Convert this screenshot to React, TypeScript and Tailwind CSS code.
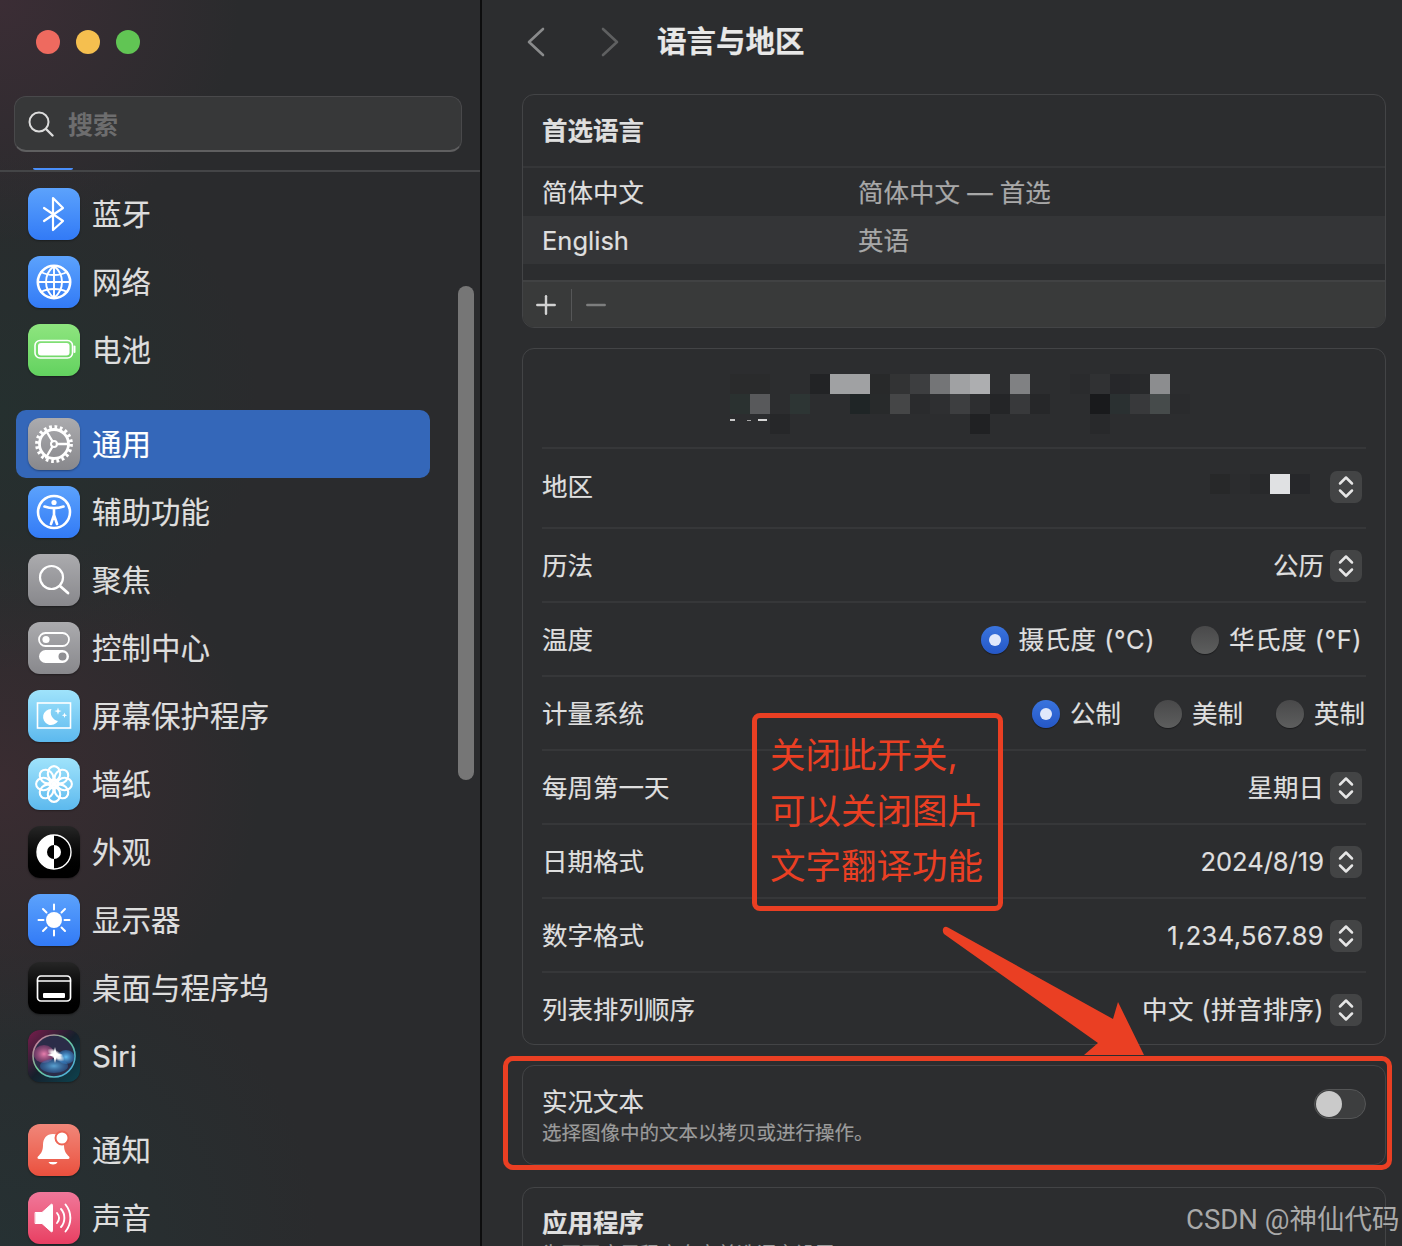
import { Minus, Plus } from "lucide-react";
import type { ReactNode } from "react";

// mosaic blocks over the blurred region text: [column, row, colour], 20px cells
const mosaic: [number, number, string][] = [
  [0, 0, "#2a2b2c"], [1, 0, "#2a2b2c"], [4, 0, "#222325"], [5, 0, "#a0a1a3"], [6, 0, "#a0a1a3"],
  [7, 0, "#28292a"], [8, 0, "#323334"], [9, 0, "#3d3e40"], [10, 0, "#747577"], [11, 0, "#a0a1a3"],
  [12, 0, "#adaeb0"], [14, 0, "#808183"], [17, 0, "#2a2b2d"], [18, 0, "#303133"], [19, 0, "#26272a"],
  [20, 0, "#28292b"], [21, 0, "#8c8d8f"],
  [0, 1, "#2a3130"], [1, 1, "#58595b"], [3, 1, "#2d3534"], [6, 1, "#1f2526"], [7, 1, "#282a2b"],
  [8, 1, "#454647"], [9, 1, "#2a2b2d"], [10, 1, "#2e2f31"], [11, 1, "#3d3e40"], [12, 1, "#2d2e30"],
  [13, 1, "#242527"], [14, 1, "#38393b"], [15, 1, "#262729"], [18, 1, "#191a1c"], [19, 1, "#2a3031"],
  [20, 1, "#38393b"], [21, 1, "#464b4b"], [22, 1, "#2a2b2d"],
  [2, 2, "#262729"], [12, 2, "#202123"], [18, 2, "#28292b"],
];

const Glyph = ({ children }: { children: ReactNode }) => (
  <svg viewBox="0 0 52 52" className="w-[52px] h-[52px]" fill="none" stroke="white" strokeWidth="2.2" strokeLinecap="round" strokeLinejoin="round">
    {children}
  </svg>
);

const Bluetooth = () => (
  <Glyph>
    <path d="M16 20 35 33 25 42V10l10 10-19 13" />
  </Glyph>
);

const Globe = () => (
  <Glyph>
    <circle cx="26" cy="26" r="16.2" strokeWidth="2.6" />
    <path d="M26 10c-5 4-8 10-8 16s3 12 8 16M26 10c5 4 8 10 8 16s-3 12-8 16M26 10v32" strokeWidth="1.9" />
    <path d="M13 16c7 4 19 4 26 0M10 26h32M13 36c7-4 19-4 26 0" strokeWidth="1.9" />
  </Glyph>
);

const Battery = () => (
  <Glyph>
    <rect x="7" y="16.5" width="37.5" height="17.5" rx="5" strokeWidth="1.6" />
    <rect x="10" y="19" width="31.5" height="12.5" rx="3" fill="white" stroke="none" />
    <path d="M46.5 22.5v5.5" strokeWidth="2" />
  </Glyph>
);

const Gear = () => (
  <Glyph>
    <circle cx="26" cy="26" r="17" strokeWidth="3.8" strokeLinecap="butt" strokeDasharray="2.7 2.64" />
    <circle cx="26" cy="26" r="14.5" strokeWidth="2.8" />
    <circle cx="26" cy="26" r="3" strokeWidth="2" />
    <path d="M28.8 26H40M24.5 23.4 18 12.500M24.5 28.6 18 39.500" strokeWidth="2.300" />
  </Glyph>
);

const Accessibility = () => (
  <Glyph>
    <circle cx="26" cy="26" r="16" strokeWidth="2.6" />
    <circle cx="26" cy="16.5" r="2.6" fill="white" stroke="none" />
    <path d="M16.5 20.5c6 2 13 2 19 0M26 22v7M26 29l-3 9M26 29l3 9" strokeWidth="2.600" />
  </Glyph>
);

const Spotlight = () => (
  <Glyph>
    <circle cx="23.500" cy="23.500" r="11.500" strokeWidth="2.200" />
    <path d="M32 32 40 39" strokeWidth="2.800" />
  </Glyph>
);

const Control = () => (
  <Glyph>
    <rect x="11" y="11" width="30" height="13" rx="6.5" strokeWidth="1.8" />
    <circle cx="18" cy="17.5" r="3.6" fill="white" stroke="none" />
    <rect x="11" y="28" width="30" height="13" rx="6.5" fill="white" stroke="none" />
    <circle cx="34.5" cy="34.5" r="4" fill="#8f8f93" stroke="none" />
  </Glyph>
);

const Screensaver = () => (
  <Glyph>
    <rect x="9.500" y="13" width="33" height="25" strokeWidth="1.6" strokeLinecap="butt" strokeLinejoin="miter" />
    <path d="M23.500 19a8 8 0 1 0 6.500 12 8.600 8.600 0 0 1-6.500-12Z" fill="white" stroke="none" />
    <path d="M30 17.500l.9 2.700 2.700.9-2.700.9-.9 2.700-.9-2.700-2.700-.9 2.700-.9ZM36.500 22.500l.7 2 2 .7-2 .7-.7 2-.7-2-2-.7 2-.7Z" fill="white" stroke="none" />
  </Glyph>
);

const Wallpaper = () => (
  <Glyph>
    {[0, 45, 90, 135, 180, 225, 270, 315].map((a) => (
      <ellipse key={a} cx="26" cy="15.5" rx="6.2" ry="7.4" strokeWidth="2.100" transform={`rotate(${a} 26 26)`} />
    ))}
    <circle cx="26" cy="26" r="2.6" fill="white" stroke="none" />
  </Glyph>
);

const Appearance = () => (
  <Glyph>
    <circle cx="26" cy="26" r="17" fill="black" strokeWidth="1.4" />
    <path d="M26 9a17 17 0 0 0 0 34Z" fill="white" stroke="none" />
    <path d="M26 19a7 7 0 0 1 0 14Z" fill="white" stroke="none" />
    <path d="M26 19a7 7 0 0 0 0 14Z" fill="black" stroke="none" />
  </Glyph>
);

const Sun = () => (
  <Glyph>
    <circle cx="26" cy="26" r="8" fill="white" stroke="none" />
    <path d="M26 10.5v5M26 36.500v5M10.500 26h5M36.500 26h5M15 15l3.500 3.500M33.500 33.500 37 37M37 15l-3.500 3.500M18.500 33.500 15 37" strokeWidth="2" />
  </Glyph>
);

const Dock = () => (
  <Glyph>
    <rect x="9.500" y="14" width="33" height="25" rx="3.500" strokeWidth="1.700" />
    <path d="M9.500 19h33" strokeWidth="1.500" />
    <rect x="15" y="31" width="22" height="5" rx="1" fill="white" stroke="none" />
  </Glyph>
);

const Siri = () => (
  <svg viewBox="0 0 52 52" className="w-[52px] h-[52px]">
    <defs>
      <linearGradient id="siri-bg" x1="0" y1="0" x2="1" y2="1">
        <stop offset="0" stopColor="#7a1c4c" />
        <stop offset="0.5" stopColor="#16202c" />
        <stop offset="1" stopColor="#0c4450" />
      </linearGradient>
      <linearGradient id="siri-ring" x1="0" y1="0" x2="1" y2="1">
        <stop offset="0" stopColor="#e0649c" />
        <stop offset="0.45" stopColor="#6cc895" />
        <stop offset="1" stopColor="#45a8ea" />
      </linearGradient>
      <radialGradient id="siri-glow">
        <stop offset="0" stopColor="white" />
        <stop offset="0.5" stopColor="white" stopOpacity="0.9" />
        <stop offset="1" stopColor="white" stopOpacity="0" />
      </radialGradient>
      <radialGradient id="siri-pink">
        <stop offset="0" stopColor="#e87fae" />
        <stop offset="1" stopColor="#9c4278" stopOpacity="0.5" />
      </radialGradient>
      <radialGradient id="siri-blue">
        <stop offset="0" stopColor="#66c0f4" />
        <stop offset="1" stopColor="#2c78c0" stopOpacity="0.5" />
      </radialGradient>
    </defs>
    <rect width="52" height="52" fill="url(#siri-bg)" />
    <circle cx="26" cy="26" r="21" fill="#2b2c48" stroke="url(#siri-ring)" strokeWidth="1.600" />
    <ellipse cx="16" cy="24" rx="10.500" ry="9" fill="url(#siri-pink)" />
    <ellipse cx="38" cy="27" rx="8.500" ry="7" fill="url(#siri-blue)" />
    <ellipse cx="26" cy="36" rx="14" ry="7" fill="url(#siri-blue)" opacity="0.8" />
    <ellipse cx="28" cy="25" rx="10" ry="4.500" fill="url(#siri-glow)" transform="rotate(35 28 25)" />
    <path d="M27 17 28.500 23.500 35 25 28.500 26.500 27 33 25.500 26.500 19 25 25.500 23.500Z" fill="white" />
  </svg>
);

const Bell = () => (
  <Glyph>
    <path d="M25 10c-6.500 0-10 4.500-10 11 0 6-2 8.500-5 11.500-1 1-.5 2.500 1 2.500h29c1.500 0 2-1.500 1-2.500-3-3-5-5.500-5-11.500 0-6.500-4-11-11-11Z" fill="white" stroke="none" />
    <path d="M20.500 38c1 1.800 2.500 2.500 4.500 2.500s3.500-.7 4.500-2.500Z" fill="white" stroke="none" />
    <circle cx="34" cy="14" r="6.500" fill="white" stroke="#ee6656" strokeWidth="2" />
  </Glyph>
);

const Sound = () => (
  <Glyph>
    <path d="M7.500 20.500h6.500l9-8c.8-.7 1.500-.3 1.500.7v25.600c0 1-.7 1.400-1.500.7l-9-8H7.500Z" fill="white" stroke="white" strokeWidth="1" />
    <path d="M29 21c2.500 3 2.500 7 0 10M33 17c4.500 5 4.500 13 0 18M37.500 12.500c6.500 8 6.500 19 0 27" strokeWidth="1.900" />
  </Glyph>
);

const Tile = ({ tone, children }: { tone: string; children: ReactNode }) => (
  <div className={`w-[52px] h-[52px] rounded-[12px] overflow-hidden shrink-0 shadow-[0_1px_2px_rgba(0,0,0,0.35)] ${tone}`}>{children}</div>
);

const blue = "bg-linear-to-b from-[#5ca2fc] to-[#327af6]";
const grey = "bg-linear-to-b from-[#ababae] to-[#88888c]";
const sky = "bg-linear-to-b from-[#9fe3fb] to-[#5cb9ee]";
const black = "bg-linear-to-b from-[#262626] to-[#000000]";

const NavItem = ({ tone, icon, label, active }: { tone: string; icon: ReactNode; label: string; active?: boolean }) => (
  <div className={`h-[68px] mx-[16px] w-[414px] pl-[12px] flex items-center gap-[12px] rounded-[10px] ${active ? "bg-[#3467b9]" : ""}`}>
    <Tile tone={tone}>{icon}</Tile>
    <span className={`pt-[1px] text-[29.5px] leading-none [-webkit-text-stroke:0.2px] ${active ? "text-white" : "text-[#dedede]"}`}>{label}</span>
  </div>
);

const Sidebar = () => (
  <aside className="relative w-[482px] h-full shrink-0 border-r-2 border-[#0d0d0e] bg-[#2a2b2d] bg-[radial-gradient(circle_at_0%_0%,#3b2d35_0,transparent_240px),radial-gradient(circle_at_0%_33%,#25302f_0,transparent_260px),radial-gradient(circle_at_0%_63%,#3a2c31_0,transparent_260px),radial-gradient(circle_at_0%_100%,#263133_0,transparent_320px)] overflow-hidden">
    <div className="h-[172px] flex flex-col border-b-2 border-[#444547]">
      <div className="flex gap-[16px] pl-[36px] pt-[30px]">
        <span className="w-[24px] h-[24px] rounded-full bg-[#ee6a5f]" />
        <span className="w-[24px] h-[24px] rounded-full bg-[#f5bf4f]" />
        <span className="w-[24px] h-[24px] rounded-full bg-[#61c554]" />
      </div>
      <div className="mt-[42px] ml-[14px] w-[448px] h-[56px] rounded-[12px] border border-[#49494b] border-b-[#5f5f60] border-b-2 bg-[#373839] flex items-center pl-[13px] gap-[14px]">
        <svg viewBox="0 0 26 26" className="w-[26px] h-[26px]" fill="none" stroke="#dcdcdc" strokeWidth="2" strokeLinecap="round">
          <circle cx="11" cy="11" r="9.500" />
          <path d="M18 18l6.500 6.500" strokeWidth="2.400" />
        </svg>
        <span className="pt-[4px] text-[25px] leading-none text-[#6d6d6e] font-bold">搜索</span>
      </div>
      <div className="mt-auto ml-[33px] w-[40px] h-[2px] rounded-b-[4px] bg-[#4a8ffa]" />
    </div>
    <div className="pt-[8px]">
      <NavItem tone={blue} icon={<Bluetooth />} label="蓝牙" />
      <NavItem tone={blue} icon={<Globe />} label="网络" />
      <NavItem tone="bg-linear-to-b from-[#8ee57f] to-[#62d25f]" icon={<Battery />} label="电池" />
      <div className="h-[26px]" />
      <NavItem tone={grey} icon={<Gear />} label="通用" active />
      <NavItem tone={blue} icon={<Accessibility />} label="辅助功能" />
      <NavItem tone={grey} icon={<Spotlight />} label="聚焦" />
      <NavItem tone={grey} icon={<Control />} label="控制中心" />
      <NavItem tone={sky} icon={<Screensaver />} label="屏幕保护程序" />
      <NavItem tone={sky} icon={<Wallpaper />} label="墙纸" />
      <NavItem tone={black} icon={<Appearance />} label="外观" />
      <NavItem tone={blue} icon={<Sun />} label="显示器" />
      <NavItem tone={black} icon={<Dock />} label="桌面与程序坞" />
      <NavItem tone="bg-[#16202a]" icon={<Siri />} label="Siri" />
      <div className="h-[26px]" />
      <NavItem tone="bg-linear-to-b from-[#f08679] to-[#ea4f3d]" icon={<Bell />} label="通知" />
      <NavItem tone="bg-linear-to-b from-[#f0779a] to-[#e83e62]" icon={<Sound />} label="声音" />
    </div>
    {/* overlay scrollbar */}
    <div className="absolute left-[458px] top-[286px] w-[16px] h-[494px] rounded-full bg-[#767676]" />
  </aside>
);

const Stepper = () => (
  <div className="w-[32px] h-[32px] rounded-[7px] bg-[#434445] flex items-center justify-center shrink-0">
    <svg viewBox="0 0 32 32" className="w-[32px] h-[32px]" fill="none" stroke="#e6e6e6" strokeWidth="2.500" strokeLinecap="round" strokeLinejoin="round">
      <path d="M10 12.500 16 6.500l6 6M10 19.500l6 6 6-6" />
    </svg>
  </div>
);

const Radio = ({ on, label, wide }: { on?: boolean; label: string; wide?: boolean }) => (
  <div className="flex items-center gap-[10px]">
    <span className={`w-[28px] h-[28px] rounded-full flex items-center justify-center shadow-[0_1px_1px_rgba(0,0,0,0.4)] ${on ? "bg-linear-to-b from-[#3a74de] to-[#2557c6]" : "bg-linear-to-b from-[#49494a] to-[#5d5e5e]"}`}>
      {on && <span className="w-[12px] h-[12px] rounded-full bg-[#e0e8fb]" />}
    </span>
    <span className={wide ? "tracking-[0.5px]" : ""}>{label}</span>
  </div>
);

const Row = ({ label, children }: { label: string; children: ReactNode }) => (
  <div className="h-[74px] pt-[2px] border-t-2 border-[#363739] flex items-center justify-between">
    <span>{label}</span>
    {children}
  </div>
);

const SelectValue = ({ value, wide }: { value: string; wide?: boolean }) => (
  <div className="flex items-center gap-[6px] pr-[4px]">
    <span className={wide ? "tracking-[0.35px]" : ""}>{value}</span>
    <Stepper />
  </div>
);

const Content = () => (
  <main className="flex-1 min-w-0 h-full bg-[#2c2d2f] pl-[40px] text-[25.500px] leading-none text-[#dfdfdf] [-webkit-text-stroke:0.2px] overflow-hidden">
    <header className="h-[94px] flex items-center pb-[10px]">
      <svg viewBox="0 0 20 32" className="w-[20px] h-[32px] ml-[4px]" fill="none" stroke="#8a8b8c" strokeWidth="2.600" strokeLinecap="round" strokeLinejoin="round">
        <path d="M17 3 3 16l14 13" />
      </svg>
      <svg viewBox="0 0 20 32" className="w-[20px] h-[32px] ml-[54px]" fill="none" stroke="#5f6061" strokeWidth="2.600" strokeLinecap="round" strokeLinejoin="round">
        <path d="M3 3l14 13L3 29" />
      </svg>
      <h1 className="ml-[37px] text-[29.500px] font-bold text-[#e8e8e8]">语言与地区</h1>
    </header>

    <section className="w-[864px] h-[234px] rounded-[12px] border border-[#434446] overflow-hidden">
      <div className="h-[73px] pl-[19px] flex items-center border-b-2 border-[#353638] font-bold">首选语言</div>
      <div className="h-[48px] pl-[19px] pt-[2px] flex items-center">
        <span className="w-[316px]">简体中文</span>
        <span className="text-[#a8a8a8]">简体中文 — 首选</span>
      </div>
      <div className="h-[48px] pl-[19px] pt-[2px] flex items-center bg-[#343537]">
        <span className="w-[316px]">English</span>
        <span className="text-[#a8a8a8]">英语</span>
      </div>
      <div className="h-[63px] pt-[16px]">
        <div className="h-[47px] bg-[#393a3a] border-t-2 border-[#414243] flex items-center pl-[8px]">
          <Plus size={30} strokeWidth={2.4} absoluteStrokeWidth className="text-[#d2d2d2]" />
          <span className="ml-[10px] w-[1px] h-[32px] bg-[#565758]" />
          <Minus size={30} strokeWidth={2.4} absoluteStrokeWidth className="ml-[9px] text-[#7d7e7e]" />
        </div>
      </div>
    </section>

    <section className="mt-[20px] w-[864px] h-[697px] rounded-[12px] border border-[#434446] px-[19px]">
      <div className="h-[98px] pt-[25px] ml-[188px]">
        <svg width="480" height="62" viewBox="0 0 480 62" shapeRendering="crispEdges">
          {mosaic.map(([c, r, f]) => (
            <rect key={`${c}-${r}`} x={c * 20} y={r * 20} width="20" height="20" fill={f} />
          ))}
          <rect x="0" y="45" width="5" height="1.500" fill="#c8c8c8" />
          <rect x="17" y="46" width="4" height="1" fill="#a8a8a8" />
          <rect x="28" y="45" width="9" height="2" fill="#d6d6d6" />
        </svg>
      </div>
      <div className="h-[80px] pb-[2px] border-t-2 border-[#363739] flex items-center justify-between">
        <span>地区</span>
        <div className="flex items-center pr-[4px]">
          <svg width="120" height="20" viewBox="0 0 120 20" shapeRendering="crispEdges" className="-mt-[7px]">
            <rect x="0" width="20" height="20" fill="#272829" />
            <rect x="20" width="20" height="20" fill="#2b2c2e" />
            <rect x="40" width="20" height="20" fill="#28292b" />
            <rect x="60" width="20" height="20" fill="#e0e1e3" />
            <rect x="80" width="20" height="20" fill="#26272a" />
          </svg>
          <Stepper />
        </div>
      </div>
      <Row label="历法">
        <SelectValue value="公历" />
      </Row>
      <Row label="温度">
        <div className="flex items-center gap-[36px] pr-[4px]">
          <Radio on wide label="摄氏度 (°C)" />
          <Radio wide label="华氏度 (°F)" />
        </div>
      </Row>
      <Row label="计量系统">
        <div className="flex items-center gap-[33px] pr-[1px]">
          <Radio on label="公制" />
          <Radio label="美制" />
          <Radio label="英制" />
        </div>
      </Row>
      <Row label="每周第一天">
        <SelectValue value="星期日" />
      </Row>
      <Row label="日期格式">
        <SelectValue value="2024/8/19" />
      </Row>
      <Row label="数字格式">
        <SelectValue wide value="1,234,567.89" />
      </Row>
      <Row label="列表排列顺序">
        <SelectValue wide value="中文 (拼音排序)" />
      </Row>
    </section>

    <section className="mt-[20px] w-[864px] h-[100px] rounded-[12px] border border-[#434446] px-[19px] flex items-center justify-between">
      <div className="pt-[2px]">
        <p className="leading-[28px]">实况文本</p>
        <p className="mt-[5px] text-[19.500px] leading-[24px] text-[#9c9c9c]">选择图像中的文本以拷贝或进行操作。</p>
      </div>
      <div className="w-[52px] h-[30px] rounded-full bg-[#3d3e3f] border border-[#555657] p-[1px] mb-[22px]">
        <div className="w-[26px] h-[26px] rounded-full bg-[#cacaca]" />
      </div>
    </section>

    <section className="mt-[22px] w-[864px] h-[140px] rounded-[12px] border border-[#434446] px-[19px] pt-[20px]">
      <h2 className="font-bold leading-[30px]">应用程序</h2>
      <p className="mt-[4px] text-[19.500px] leading-[24px] text-[#9c9c9c]">为不同应用程序自定首选语言设置。</p>
    </section>
  </main>
);

export default function App() {
  return (
    <div className="relative flex w-[1402px] h-[1246px] overflow-hidden bg-[#2c2d2f] font-[Inter,'Noto_Sans_CJK_SC',sans-serif]">
      <Sidebar />
      <Content />

      {/* hand-drawn annotations sitting on top of the screenshot */}
      <div className="absolute left-[752px] top-[713px] w-[251px] h-[198px] rounded-[8px] border-[5px] border-[#ea3f23] pl-[13px] pt-[10px] text-[35.500px] leading-[55.500px] text-[#ea3f23] font-normal">
        <p>关闭此开关,</p>
        <p>可以关闭图片</p>
        <p>文字翻译功能</p>
      </div>
      <div className="absolute left-[503px] top-[1056px] w-[889px] h-[114px] rounded-[10px] border-[5px] border-[#ea3f23]" />
      <svg className="absolute left-[930px] top-[920px]" width="230" height="140" viewBox="930 920 230 140">
        <path d="M948 927.500 1113 1019 1118 1002 1144 1055H1084L1098 1043 944 934C941 930 944 925 948 927.500Z" fill="#ea3f23" />
      </svg>
      <span className="absolute left-[1186px] top-[1203px] text-[27.500px] leading-[34px] text-[#a9a9a9] font-['Roboto','Noto_Sans_CJK_SC',sans-serif] whitespace-nowrap">CSDN @神仙代码</span>
    </div>
  );
}
